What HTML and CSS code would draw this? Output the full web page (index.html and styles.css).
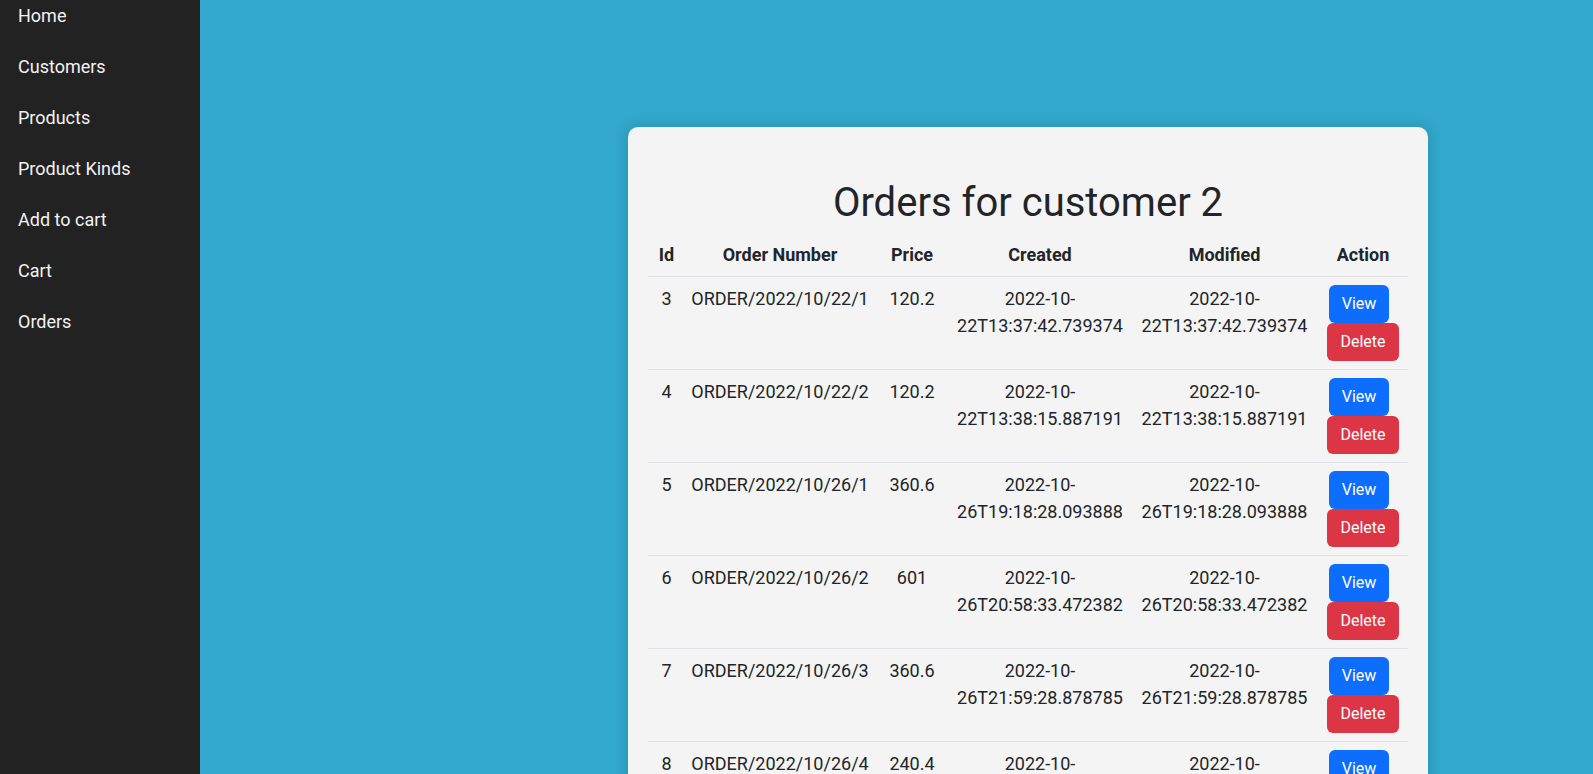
FILE: index.html
```html
<!DOCTYPE html>
<html lang="en">
<head>
<meta charset="utf-8">
<title>Orders</title>
<link rel="stylesheet" href="styles.css">
</head>
<body>
<div class="layout">
  <nav class="sidebar">
    <ul class="nav-list">
      <li><a href="#" class="nav-link">Home</a></li>
      <li><a href="#" class="nav-link">Customers</a></li>
      <li><a href="#" class="nav-link">Products</a></li>
      <li><a href="#" class="nav-link">Product Kinds</a></li>
      <li><a href="#" class="nav-link">Add to cart</a></li>
      <li><a href="#" class="nav-link">Cart</a></li>
      <li><a href="#" class="nav-link">Orders</a></li>
    </ul>
  </nav>
  <main class="main">
    <section class="card">
      <h1 class="title">Orders for customer 2</h1>
      <table class="table">
        <thead>
          <tr><th class="col-id">Id</th><th class="col-num">Order Number</th><th class="col-price">Price</th><th class="col-created">Created</th><th class="col-modified">Modified</th><th class="col-action">Action</th></tr>
        </thead>
        <tbody>
          <tr><td>3</td><td>ORDER/2022/10/22/1</td><td>120.2</td><td>2022-10-22T13:37:42.739374</td><td>2022-10-22T13:37:42.739374</td><td><button class="btn btn-view">View</button><button class="btn btn-delete">Delete</button></td></tr>
          <tr><td>4</td><td>ORDER/2022/10/22/2</td><td>120.2</td><td>2022-10-22T13:38:15.887191</td><td>2022-10-22T13:38:15.887191</td><td><button class="btn btn-view">View</button><button class="btn btn-delete">Delete</button></td></tr>
          <tr><td>5</td><td>ORDER/2022/10/26/1</td><td>360.6</td><td>2022-10-26T19:18:28.093888</td><td>2022-10-26T19:18:28.093888</td><td><button class="btn btn-view">View</button><button class="btn btn-delete">Delete</button></td></tr>
          <tr><td>6</td><td>ORDER/2022/10/26/2</td><td>601</td><td>2022-10-26T20:58:33.472382</td><td>2022-10-26T20:58:33.472382</td><td><button class="btn btn-view">View</button><button class="btn btn-delete">Delete</button></td></tr>
          <tr><td>7</td><td>ORDER/2022/10/26/3</td><td>360.6</td><td>2022-10-26T21:59:28.878785</td><td>2022-10-26T21:59:28.878785</td><td><button class="btn btn-view">View</button><button class="btn btn-delete">Delete</button></td></tr>
          <tr><td>8</td><td>ORDER/2022/10/26/4</td><td>240.4</td><td>2022-10-26T22:04:11.512304</td><td>2022-10-26T22:04:11.512304</td><td><button class="btn btn-view">View</button><button class="btn btn-delete">Delete</button></td></tr>
        </tbody>
      </table>
    </section>
  </main>
</div>
</body>
</html>
```

FILE: styles.css
```css
html { font-size: 16px; }
* { box-sizing: border-box; }
body {
  margin: 0;
  font-family: Roboto, "Liberation Sans", sans-serif;
  font-size: 18px;
  line-height: 1.5;
  color: #212529;
  background: #31a8cc;
  overflow: hidden;
  height: 774px;
}
.layout {
  display: flex;
  height: 100%;
}
.sidebar {
  width: 200px;
  flex: 0 0 200px;
  background: #222222;
  height: 100%;
}
.nav-list {
  list-style: none;
  margin: 0;
  padding: 2px 0 0 0;
  display: flex;
  flex-direction: column;
  gap: 24px;
}
.nav-link {
  display: block;
  padding: 0 18px;
  color: #f2f2f2;
  text-decoration: none;
}
.main {
  flex: 1;
  padding: 127px 0 0 428px;
}
.card {
  width: 800px;
  background: #f4f4f4;
  border-radius: 10px;
  box-shadow: 0 0 14px rgba(0, 0, 0, 0.16);
  padding: 32px 20px 20px;
}
.title {
  margin: 20px 0 6px;
  font-size: 2.5rem;
  font-weight: 400;
  line-height: 1.2;
  text-align: center;
}
.table {
  width: 100%;
  border-collapse: collapse;
  table-layout: fixed;
}
.col-id { width: 37px; }
.col-num { width: 190px; }
.col-price { width: 74px; }
.col-created { width: 182px; }
.col-modified { width: 187px; }
.table th,
.table td {
  padding: 8px;
  text-align: center;
  vertical-align: top;
  border-bottom: 1px solid #dee2e6;
}
.table td:nth-child(2) {
  padding-left: 6px;
  padding-right: 6px;
}
.table th {
  font-weight: 700;
}
.btn {
  display: inline-block;
  font-family: inherit;
  font-size: 1rem;
  line-height: 1.5;
  padding: 6px 12px;
  border: 1px solid transparent;
  border-radius: 6px;
  color: #fff;
  cursor: pointer;
  vertical-align: middle;
}
.btn-view {
  background: #0d6efd;
  margin-right: 8px;
}
.btn-delete { background: #dc3545; }
```
